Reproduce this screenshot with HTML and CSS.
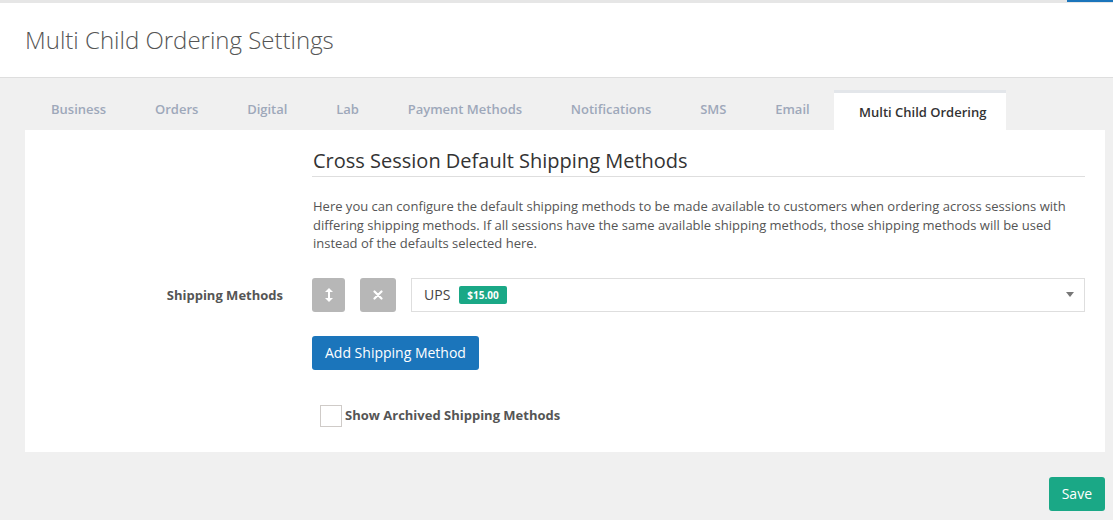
FILE: index.html
```html
<!DOCTYPE html>
<html lang="en">
<head>
  <meta charset="UTF-8" />
  <title>Multi Child Ordering Settings</title>
  <link rel="stylesheet" href="styles.css">
</head>
<body>
  <div class="topbar">
    <div class="topbar-fill"></div>
    <div class="topbar-active"></div>
  </div>

  <header class="page-header">
    <h1>Multi Child Ordering Settings</h1>
  </header>

  <main class="content">
    <ul class="tabs">
      <li>Business</li>
      <li>Orders</li>
      <li>Digital</li>
      <li>Lab</li>
      <li>Payment Methods</li>
      <li>Notifications</li>
      <li>SMS</li>
      <li>Email</li>
      <li class="active">Multi Child Ordering</li>
    </ul>

    <section class="panel">
      <div class="row">
        <div class="label"></div>
        <div class="field">
          <h2 class="section-title">Cross Session Default Shipping Methods</h2>
          <p class="help">Here you can configure the default shipping methods to be made available to customers when ordering across sessions with differing shipping methods. If all sessions have the same available shipping methods, those shipping methods will be used instead of the defaults selected here.</p>
        </div>
      </div>

      <div class="row row-methods">
        <div class="label">Shipping Methods</div>
        <div class="field">
          <div class="method">
            <button class="icon-btn" type="button" title="Reorder">
              <svg width="10" height="16" viewBox="0 0 10 16">
                <path d="M5 1 L9 5 H6 V11 H9 L5 15 L1 11 H4 V5 H1 Z" fill="#fff"/>
              </svg>
            </button>
            <button class="icon-btn" type="button" title="Remove">
              <svg width="10" height="10" viewBox="0 0 10 10">
                <path d="M1.5 1.5 L8.5 8.5 M8.5 1.5 L1.5 8.5" stroke="#fff" stroke-width="2.2" stroke-linecap="round"/>
              </svg>
            </button>
            <div class="select">
              <span class="select-value">UPS</span>
              <span class="badge">$15.00</span>
              <span class="caret"></span>
            </div>
          </div>

          <button class="btn-primary" type="button">Add Shipping Method</button>

          <label class="check">
            <span class="check-box"></span>
            <span class="check-label">Show Archived Shipping Methods</span>
          </label>
        </div>
      </div>
    </section>

    <div class="actions">
      <button class="btn-save" type="button">Save</button>
    </div>
  </main>
</body>
</html>
```

FILE: styles.css
```css
* {
  box-sizing: border-box;
}

body {
  margin: 0;
  padding: 0;
  background-color: #f0f0f0;
  font-family: "Open Sans", "Noto Sans", sans-serif;
  color: #555;
}

.topbar {
  display: flex;
  height: 3px;
  background-color: #e6e6e6;
}

.topbar-fill {
  flex: 1;
}

.topbar-active {
  width: 46px;
  height: 2px;
  background-color: #1b75bb;
}

.page-header {
  background-color: #fff;
  border-bottom: 1px solid #dedede;
  height: 75px;
  display: flex;
  align-items: center;
  padding-left: 25px;
}

.page-header h1 {
  margin: 0;
  font-size: 24px;
  font-weight: 300;
  color: #555;
  padding-bottom: 2px;
}

.content {
  padding: 12px 8px 0 25px;
}

/* tabs */
.tabs {
  list-style: none;
  margin: 0;
  padding: 0;
  display: flex;
  align-items: flex-end;
}

.tabs li {
  font-size: 13px;
  font-weight: 600;
  color: #9ea8ba;
  padding: 0 24.4px 6px;
  height: 40px;
  border-top: 3px solid transparent;
  display: flex;
  align-items: center;
}

.tabs li:first-child {
  padding-left: 26px;
}

.tabs li.active {
  background-color: #fff;
  color: #333;
  border-top-color: #e3e6ea;
  padding: 0 20px 0 25px;
}

/* panel */
.panel {
  background-color: #fff;
  padding: 16px 20px 25px 0;
}

.row {
  display: grid;
  grid-template-columns: 258px 1fr;
  column-gap: 29px;
}

.row .label {
  text-align: right;
  font-size: 13px;
  font-weight: 700;
  color: #555;
  line-height: 34px;
}

.section-title {
  margin: 0;
  font-size: 20px;
  font-weight: 400;
  color: #333;
  padding-top: 1px;
  padding-bottom: 2px;
  border-bottom: 1px solid #dedede;
  padding-left: 1px;
}

.help {
  margin: 20px 0 25px;
  font-size: 13px;
  line-height: 18.5px;
  color: #555;
  padding-left: 1px;
  padding-right: 10px;
}

.method {
  display: flex;
  align-items: center;
  gap: 15px;
}

.icon-btn {
  width: 33px;
  height: 34px;
  border: none;
  border-radius: 3px;
  background-color: #b7b7b7;
  display: flex;
  align-items: center;
  justify-content: center;
  padding: 0;
}

.icon-btn + .icon-btn {
  width: 36px;
}

.select {
  flex: 1;
  height: 34px;
  border: 1px solid #dedede;
  display: flex;
  align-items: center;
  padding: 0 10px 0 12px;
}

.select-value {
  font-size: 14px;
  color: #444;
}

.badge {
  margin-left: 9px;
  background-color: #1aa886;
  color: #fff;
  font-size: 10px;
  font-weight: 700;
  height: 18px;
  line-height: 18px;
  padding: 0 8px;
  border-radius: 2px;
}

.caret {
  margin-left: auto;
  width: 0;
  height: 0;
  border-left: 4px solid transparent;
  border-right: 4px solid transparent;
  border-top: 5px solid #777;
}

.btn-primary {
  margin-top: 24px;
  display: block;
  height: 34px;
  padding: 0 13px;
  border: none;
  border-radius: 3px;
  background-color: #1b75bb;
  color: #fff;
  font-family: inherit;
  font-size: 14px;
}

.check {
  margin-top: 35px;
  margin-left: 8px;
  display: flex;
  align-items: center;
  gap: 3px;
}

.check-box {
  width: 22px;
  height: 22px;
  border: 1px solid #cfcbc8;
  background-color: #fff;
}

.check-label {
  font-size: 13px;
  font-weight: 700;
  color: #555;
  padding-bottom: 2px;
}

/* footer actions */
.actions {
  display: flex;
  justify-content: flex-end;
  padding-top: 25px;
}

.btn-save {
  height: 34px;
  padding: 0 13px;
  border: none;
  border-radius: 3px;
  background-color: #1aa886;
  color: #fff;
  font-family: inherit;
  font-size: 14px;
}
```
